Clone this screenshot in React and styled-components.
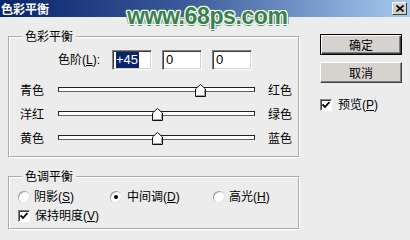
import React from "react";
import styled, { createGlobalStyle } from "styled-components";

const GlobalStyle = createGlobalStyle`
  html, body {
    margin: 0;
    padding: 0;
    background: #ececec;
  }
  body {
    font-family: "Liberation Sans", "Noto Sans CJK SC", sans-serif;
    font-size: 12px;
    color: #000;
  }
`;

const Window = styled.div`
  position: relative;
  width: 410px;
  height: 240px;
  background: #ececec;
  display: flex;
  flex-direction: column;
  overflow: hidden;
`;

const TitleBar = styled.div`
  flex: none;
  height: 17px;
  display: flex;
  align-items: center;
  justify-content: space-between;
  padding: 0 3px 0 1px;
  background: linear-gradient(to right, #0a246a, #3a5a9a 45%, #a6caf0);
`;

const Title = styled.span`
  color: #fff;
  font-family: "Noto Sans CJK SC", sans-serif;
  font-weight: bold;
  font-size: 12px;
  line-height: 17px;
`;

const CloseButton = styled.div`
  width: 15px;
  height: 13px;
  box-sizing: border-box;
  background: #d4d0c8;
  border: 1px solid;
  border-color: #fff #404040 #404040 #fff;
  display: flex;
  align-items: center;
  justify-content: center;
`;

const Watermark = styled.div`
  position: absolute;
  left: 127px;
  top: 1px;
  font-family: "Liberation Sans", Arial, sans-serif;
  font-weight: bold;
  font-size: 23px;
  line-height: 30px;
  letter-spacing: -0.4px;
  color: #3a8050;
  text-shadow:
    1px 0 0 #f4f8f4, -1px 0 0 #f4f8f4, 0 1px 0 #f4f8f4, 0 -1px 0 #f4f8f4,
    1px 1px 0 #f4f8f4, -1px -1px 0 #f4f8f4, 1px -1px 0 #f4f8f4, -1px 1px 0 #f4f8f4,
    2px 0 0 #5e8f6c, -2px 0 0 #5e8f6c, 0 2px 0 #5e8f6c, 0 -2px 0 #5e8f6c;
`;

const Content = styled.div`
  flex: 1;
  display: flex;
  align-items: flex-start;
  padding: 14px 0 0 8px;
`;

const LeftColumn = styled.div`
  width: 292px;
  display: flex;
  flex-direction: column;
  gap: 13px;
`;

const GroupBox = styled.fieldset`
  margin: 0;
  padding: 7px 0 ${(p) => p.$bottom}px 0;
  min-width: 0;
  border: 2px groove #ffffff;
  display: flex;
  flex-direction: column;
  gap: ${(p) => p.$gap}px;
`;

const Legend = styled.legend`
  margin-left: 12px;
  padding: 0 3px;
  font-size: 12px;
  line-height: 12px;
`;

const LevelsRow = styled.div`
  display: flex;
  align-items: center;
  padding-left: 48px;
  height: 20px;
`;

const LevelsLabel = styled.span`
  width: 54px;
  line-height: 14px;
`;

const Inputs = styled.div`
  display: flex;
  gap: 10px;
`;

const NumberBox = styled.div`
  width: 40px;
  height: 20px;
  box-sizing: border-box;
  background: #fff;
  border: 1px solid;
  border-color: #808080 #fff #fff #808080;
  box-shadow: inset 1px 1px 0 #404040, inset -1px -1px 0 #d4d0c8;
  padding: 1px 0 0 3px;
  font-family: "Liberation Sans", Arial, sans-serif;
  font-size: 13px;
  line-height: 16px;
`;

const Selected = styled.span`
  background: #0a246a;
  color: #fff;
  padding: 0 1px 1px 0;
`;

const Sliders = styled.div`
  display: flex;
  flex-direction: column;
  margin-top: 1px;
`;

const SliderRow = styled.div`
  display: grid;
  grid-template-columns: 38px 197px auto;
  align-items: center;
  height: 24px;
  padding-left: 10px;
`;

const SideLabel = styled.span`
  line-height: 14px;
  margin-top: 2px;
  margin-left: ${(p) => (p.$right ? 13 : 0)}px;
`;

const Track = styled.div`
  position: relative;
  height: 5px;
  box-sizing: border-box;
  border: 1px solid #202020;
  border-bottom-color: #606060;
  background: #fff;
  margin-top: -2px;
`;

const Thumb = styled.svg`
  position: absolute;
  top: -4px;
  margin-left: -5px;
  display: block;
`;

const RadioRow = styled.div`
  display: grid;
  grid-template-columns: 92px 103px auto;
  padding-left: 8px;
  height: 14px;
  align-items: center;
`;

const Option = styled.label`
  display: flex;
  align-items: center;
  gap: ${(p) => p.$gap || 4}px;
  line-height: 14px;
  white-space: nowrap;
`;

const RadioDot = styled.span`
  width: 12px;
  height: 12px;
  box-sizing: border-box;
  border-radius: 50%;
  background: #fff;
  box-shadow: inset 1px 1px 0 #9a9a9a, inset -1px -1px 0 #e4e4e4;
  display: flex;
  align-items: center;
  justify-content: center;
  &::after {
    content: "";
    width: 4px;
    height: 4px;
    border-radius: 50%;
    background: ${(p) => (p.$checked ? "#000" : "transparent")};
  }
`;

const CheckRow = styled.div`
  display: flex;
  padding-left: ${(p) => p.$left}px;
  height: 14px;
  align-items: center;
`;

const CheckBox = styled.span`
  width: 12px;
  height: 12px;
  box-sizing: border-box;
  background: #fff;
  border: 1px solid;
  border-color: #808080 #fff #fff #808080;
  box-shadow: inset 1px 1px 0 #404040;
  display: flex;
  align-items: center;
  justify-content: center;
`;

const RightColumn = styled.div`
  margin: 3px 0 0 20px;
  display: flex;
  flex-direction: column;
  gap: 7px;
`;

const Button = styled.button`
  width: 82px;
  height: 21px;
  margin: 0;
  padding: 0;
  box-sizing: border-box;
  font-family: "Noto Sans CJK SC", sans-serif;
  font-size: 12px;
  line-height: 14px;
  color: #000;
  background: #d6d3ce;
  border: 1px solid;
  border-color: ${(p) => (p.$default ? "#000" : "#fff #404040 #404040 #fff")};
  box-shadow: ${(p) =>
    p.$default
      ? "inset 1px 1px 0 #fff, inset -1px -1px 0 #404040, inset -2px -2px 0 #808080"
      : "inset -1px -1px 0 #808080"};
`;

const PreviewRow = styled.div`
  margin-top: 8px;
  display: flex;
  align-items: center;
`;

function Check() {
  return (
    <svg width="8" height="8" viewBox="0 0 8 8">
      <path d="M0.5 3.5 L3 6 L7.5 1" fill="none" stroke="#000" strokeWidth="1.8" />
    </svg>
  );
}

function Slider({ left, right, value }) {
  const pct = ((value + 100) / 200) * 100;
  return (
    <SliderRow>
      <SideLabel>{left}</SideLabel>
      <Track>
        <Thumb width="11" height="13" viewBox="0 0 11 13" style={{ left: pct + "%" }}>
          <polygon
            points="5.5,0.5 10.5,5 10.5,12.5 0.5,12.5 0.5,5"
            fill="#fff"
            stroke="#101010"
          />
          <polyline points="1.5,11.5 1.5,5.5 5.5,1.8" fill="none" stroke="#fff" />
          <polyline points="9.5,5.5 9.5,11.5 1.5,11.5" fill="none" stroke="#a0a0a0" />
        </Thumb>
      </Track>
      <SideLabel $right>{right}</SideLabel>
    </SliderRow>
  );
}

export default function App() {
  return (
    <>
      <GlobalStyle />
      <Window>
        <TitleBar>
          <Title>色彩平衡</Title>
          <CloseButton>
            <svg width="8" height="7" viewBox="0 0 8 7">
              <path d="M0.5 0.5 L7.5 6.5 M7.5 0.5 L0.5 6.5" stroke="#000" strokeWidth="1.6" />
            </svg>
          </CloseButton>
        </TitleBar>
        <Watermark>www.68ps.com</Watermark>
        <Content>
          <LeftColumn>
            <GroupBox $bottom={6} $gap={7}>
              <Legend>色彩平衡</Legend>
              <LevelsRow>
                <LevelsLabel>
                  色阶(<u>L</u>):
                </LevelsLabel>
                <Inputs>
                  <NumberBox>
                    <Selected>+45</Selected>
                  </NumberBox>
                  <NumberBox>0</NumberBox>
                  <NumberBox>0</NumberBox>
                </Inputs>
              </LevelsRow>
              <Sliders>
                <Slider left="青色" right="红色" value={45} />
                <Slider left="洋红" right="绿色" value={0} />
                <Slider left="黄色" right="蓝色" value={0} />
              </Sliders>
            </GroupBox>
            <GroupBox $bottom={5} $gap={5}>
              <Legend>色调平衡</Legend>
              <RadioRow>
                <Option>
                  <RadioDot />
                  <span>
                    阴影(<u>S</u>)
                  </span>
                </Option>
                <Option $gap={5}>
                  <RadioDot $checked />
                  <span>
                    中间调(<u>D</u>)
                  </span>
                </Option>
                <Option>
                  <RadioDot />
                  <span>
                    高光(<u>H</u>)
                  </span>
                </Option>
              </RadioRow>
              <CheckRow $left={8}>
                <Option $gap={5}>
                  <CheckBox>
                    <Check />
                  </CheckBox>
                  <span>
                    保持明度(<u>V</u>)
                  </span>
                </Option>
              </CheckRow>
            </GroupBox>
          </LeftColumn>
          <RightColumn>
            <Button $default>确定</Button>
            <Button>取消</Button>
            <PreviewRow>
              <Option $gap={6}>
                <CheckBox>
                  <Check />
                </CheckBox>
                <span>
                  预览(<u>P</u>)
                </span>
              </Option>
            </PreviewRow>
          </RightColumn>
        </Content>
      </Window>
    </>
  );
}
